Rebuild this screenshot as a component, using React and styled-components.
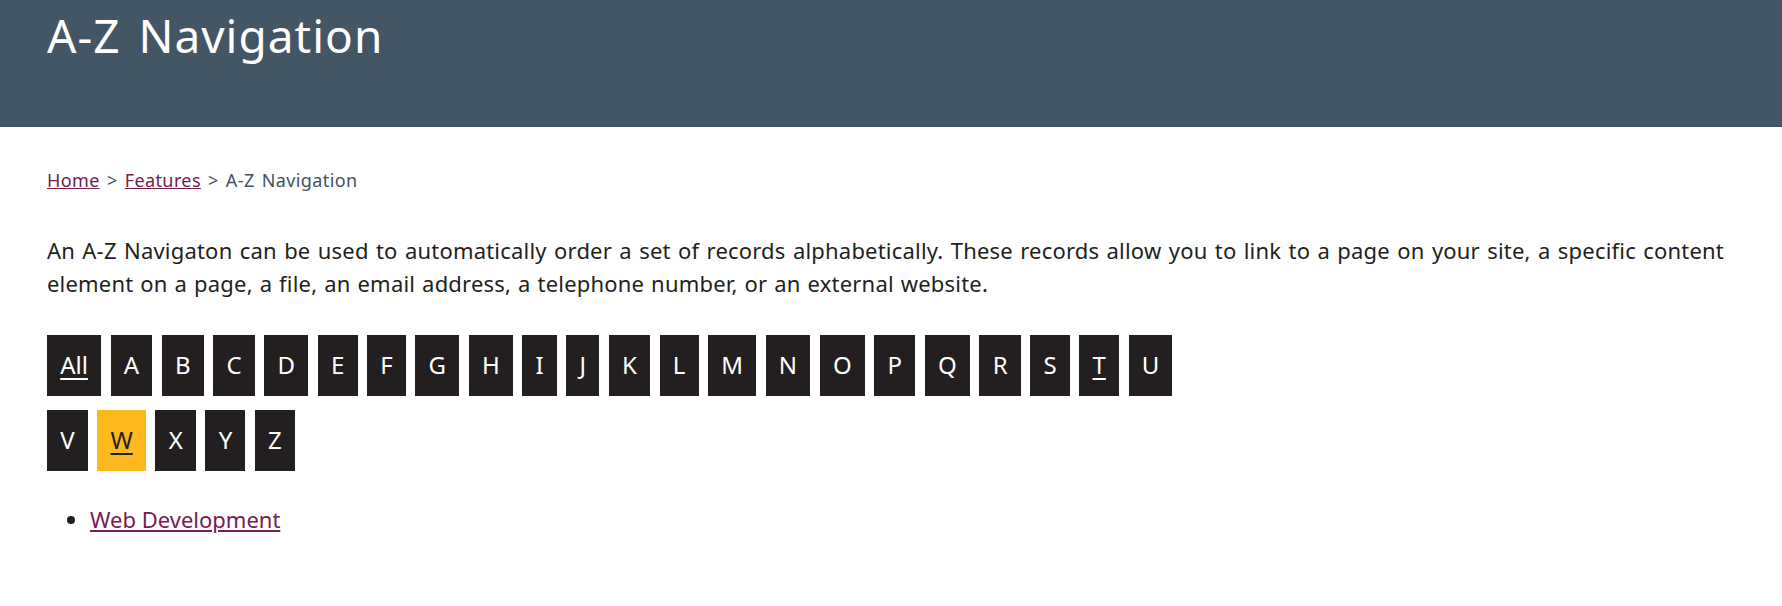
import styled, { createGlobalStyle } from "styled-components";

const GlobalStyle = createGlobalStyle`
  * { box-sizing: border-box; }
  body {
    margin: 0;
    background: #fff;
    font-family: "Noto Sans", "Open Sans", sans-serif;
    color: #231f20;
  }
`;

const Header = styled.header`
  background: #435665;
  height: 127px;
  padding: 8px 58px 0 47px;
`;

const Title = styled.h1`
  margin: 0;
  font-size: 46px;
  font-weight: 400;
  line-height: 55px;
  letter-spacing: 1px;
  word-spacing: 5px;
  color: #fff;
`;

const Main = styled.main`
  padding: 40px 58px 0 47px;
`;

const Breadcrumb = styled.nav`
  font-size: 18px;
  line-height: 27px;
  letter-spacing: 0.4px;
  word-spacing: 2px;
  color: #41525f;
`;

const Crumb = styled.a`
  color: #75204f;
  text-decoration: underline;
`;

const Intro = styled.p`
  margin: 40px 0 35px;
  font-size: 22px;
  line-height: 33px;
  letter-spacing: 0.2px;
  word-spacing: 1px;
  text-align: justify;
`;

const Letters = styled.div`
  display: flex;
  flex-wrap: wrap;
  gap: 14px 9.5px;
  max-width: 1150px;
`;

const Letter = styled.a`
  display: flex;
  align-items: center;
  justify-content: center;
  height: 61px;
  padding: 0 13.2px 2px;
  font-size: 24px;
  background: ${(p) => (p.$active ? "#fdb81e" : "#231f20")};
  color: ${(p) => (p.$active ? "#231f20" : "#fff")};
  text-decoration: ${(p) => (p.$underline ? "underline" : "none")};
  text-underline-offset: 4px;
  text-decoration-thickness: 2px;
`;

const Results = styled.ul`
  margin: 32px 0 0;
  padding-left: 43px;
  font-size: 22px;
  line-height: 33px;
`;

const ResultLink = styled.a`
  color: #75204f;
  text-decoration: underline;
`;

const alphabet = "ABCDEFGHIJKLMNOPQRSTUVWXYZ".split("");

export default function App() {
  return (
    <>
      <GlobalStyle />
      <Header>
        <Title>A-Z Navigation</Title>
      </Header>
      <Main>
        <Breadcrumb>
          <Crumb href="#">Home</Crumb> &gt; <Crumb href="#">Features</Crumb> &gt; A-Z Navigation
        </Breadcrumb>
        <Intro>
          An A-Z Navigaton can be used to automatically order a set of records alphabetically. These
          records allow you to link to a page on your site, a specific content element on a page, a
          file, an email address, a telephone number, or an external website.
        </Intro>
        <Letters>
          <Letter href="#" $underline>All</Letter>
          {alphabet.map((l) => (
            <Letter key={l} href="#" $active={l === "W"} $underline={l === "W" || l === "T"}>
              {l}
            </Letter>
          ))}
        </Letters>
        <Results>
          <li>
            <ResultLink href="#">Web Development</ResultLink>
          </li>
        </Results>
      </Main>
    </>
  );
}
